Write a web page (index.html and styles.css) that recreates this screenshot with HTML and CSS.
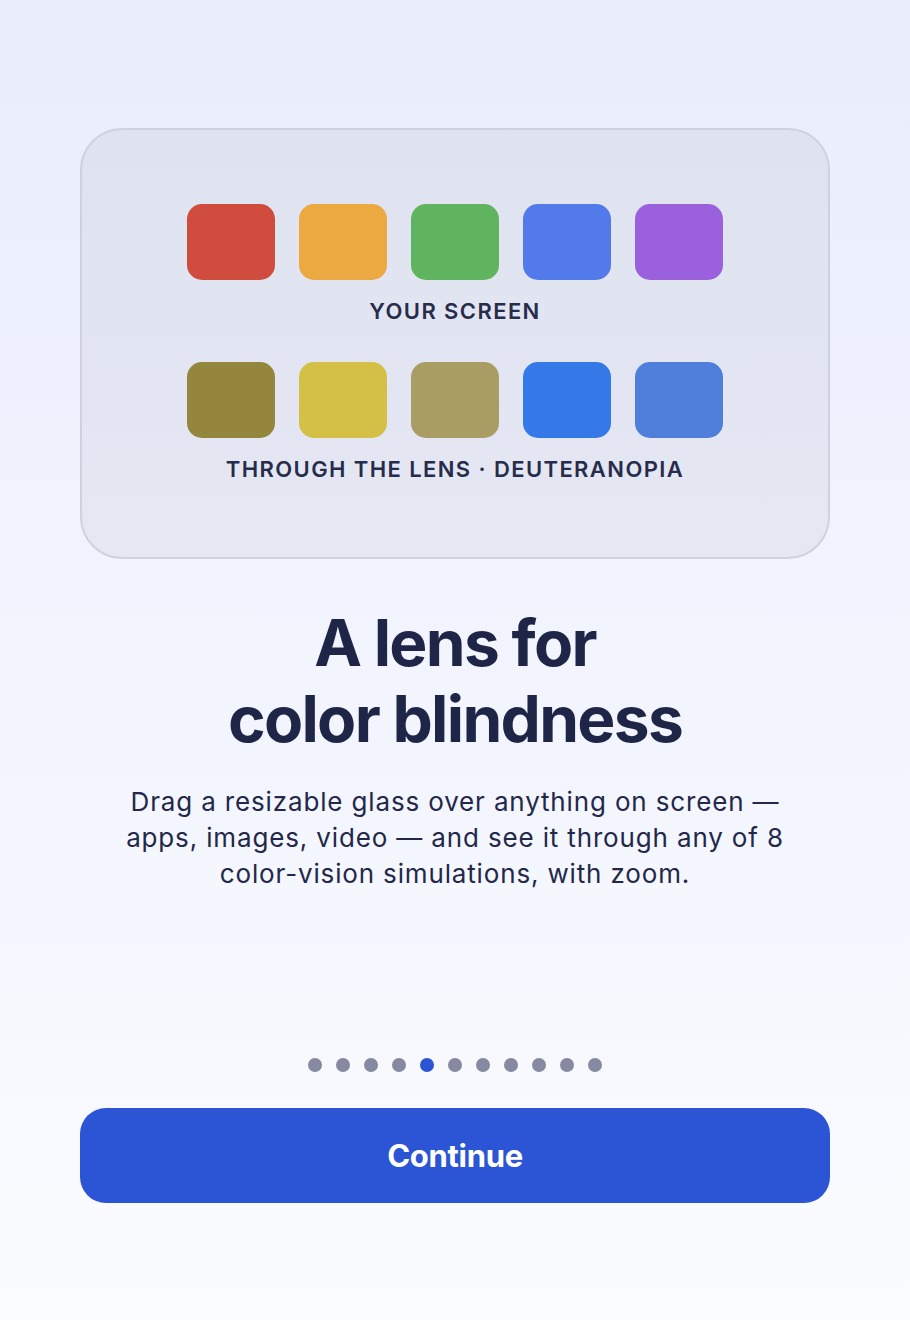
FILE: index.html
```html
<!DOCTYPE html>
<html lang="en">
<head>
<meta charset="utf-8">
<title>A lens for color blindness</title>
<link rel="stylesheet" href="styles.css">
</head>
<body>
<main class="screen">
  <section class="card">
    <div class="swatches">
      <span class="sw" style="background:#d04c3f"></span>
      <span class="sw" style="background:#eca841"></span>
      <span class="sw" style="background:#60b45f"></span>
      <span class="sw" style="background:#527aeb"></span>
      <span class="sw" style="background:#9a60de"></span>
    </div>
    <div class="label">YOUR SCREEN</div>
    <div class="swatches second">
      <span class="sw" style="background:#94863c"></span>
      <span class="sw" style="background:#d4c047"></span>
      <span class="sw" style="background:#a99d63"></span>
      <span class="sw" style="background:#3578e8"></span>
      <span class="sw" style="background:#4f7fdb"></span>
    </div>
    <div class="label">THROUGH THE LENS · DEUTERANOPIA</div>
  </section>

  <h1 class="title">A lens for<br>color blindness</h1>
  <p class="desc">Drag a resizable glass over anything on screen — apps, images, video — and see it through any of 8 color-vision simulations, with zoom.</p>

  <div class="spacer"></div>

  <div class="dots">
    <span class="dot"></span><span class="dot"></span><span class="dot"></span><span class="dot"></span>
    <span class="dot active"></span>
    <span class="dot"></span><span class="dot"></span><span class="dot"></span><span class="dot"></span><span class="dot"></span><span class="dot"></span>
  </div>

  <button class="cta">Continue</button>
</main>
</body>
</html>
```

FILE: styles.css
```css
* { box-sizing: border-box; }
html, body { margin: 0; padding: 0; }
body {
  font-family: Inter, "Noto Sans", "Liberation Sans", sans-serif;
  color: #1f2547;
  background: linear-gradient(180deg, #e9edfc 0%, #f2f4fe 50%, #fbfcff 100%);
  min-height: 1320px;
}
.screen {
  min-height: 1320px;
  display: flex;
  flex-direction: column;
  align-items: center;
  padding: 128px 80px 117px;
}
.card {
  width: 750px;
  height: 431px;
  border: 2px solid #cfd2de;
  border-radius: 42px;
  background: linear-gradient(180deg, #dfe3f0 0%, #e5e8f3 100%);
  display: flex;
  flex-direction: column;
  align-items: center;
  padding-top: 74px;
}
.swatches {
  display: flex;
  gap: 24px;
}
.swatches.second { margin-top: 38px; }
.sw {
  width: 88px;
  height: 76px;
  border-radius: 15px;
  display: block;
}
.label {
  margin-top: 18px;
  font-size: 22px;
  line-height: 26px;
  font-weight: 600;
  letter-spacing: 1.4px;
  color: #272c4b;
}
.title {
  margin: 46px 0 0;
  font-size: 64px;
  line-height: 76px;
  font-weight: 700;
  letter-spacing: -1.7px;
  text-align: center;
  color: #1f2547;
}
.desc {
  margin: 27px 0 0;
  width: 690px;
  font-size: 26px;
  line-height: 36px;
  letter-spacing: 0.85px;
  text-align: center;
  color: #23284a;
}
.spacer { flex: 1; }
.dots {
  display: flex;
  gap: 14px;
  margin-bottom: 36px;
}
.dot {
  width: 14px;
  height: 14px;
  border-radius: 50%;
  background: #868aa0;
  display: block;
}
.dot.active { background: #2c55d6; }
.cta {
  width: 750px;
  height: 95px;
  border: none;
  border-radius: 26px;
  background: #2c55d5;
  color: #fff;
  font-family: Inter, "Noto Sans", "Liberation Sans", sans-serif;
  font-size: 31px;
  font-weight: 700;
  letter-spacing: -0.3px;
}
```
